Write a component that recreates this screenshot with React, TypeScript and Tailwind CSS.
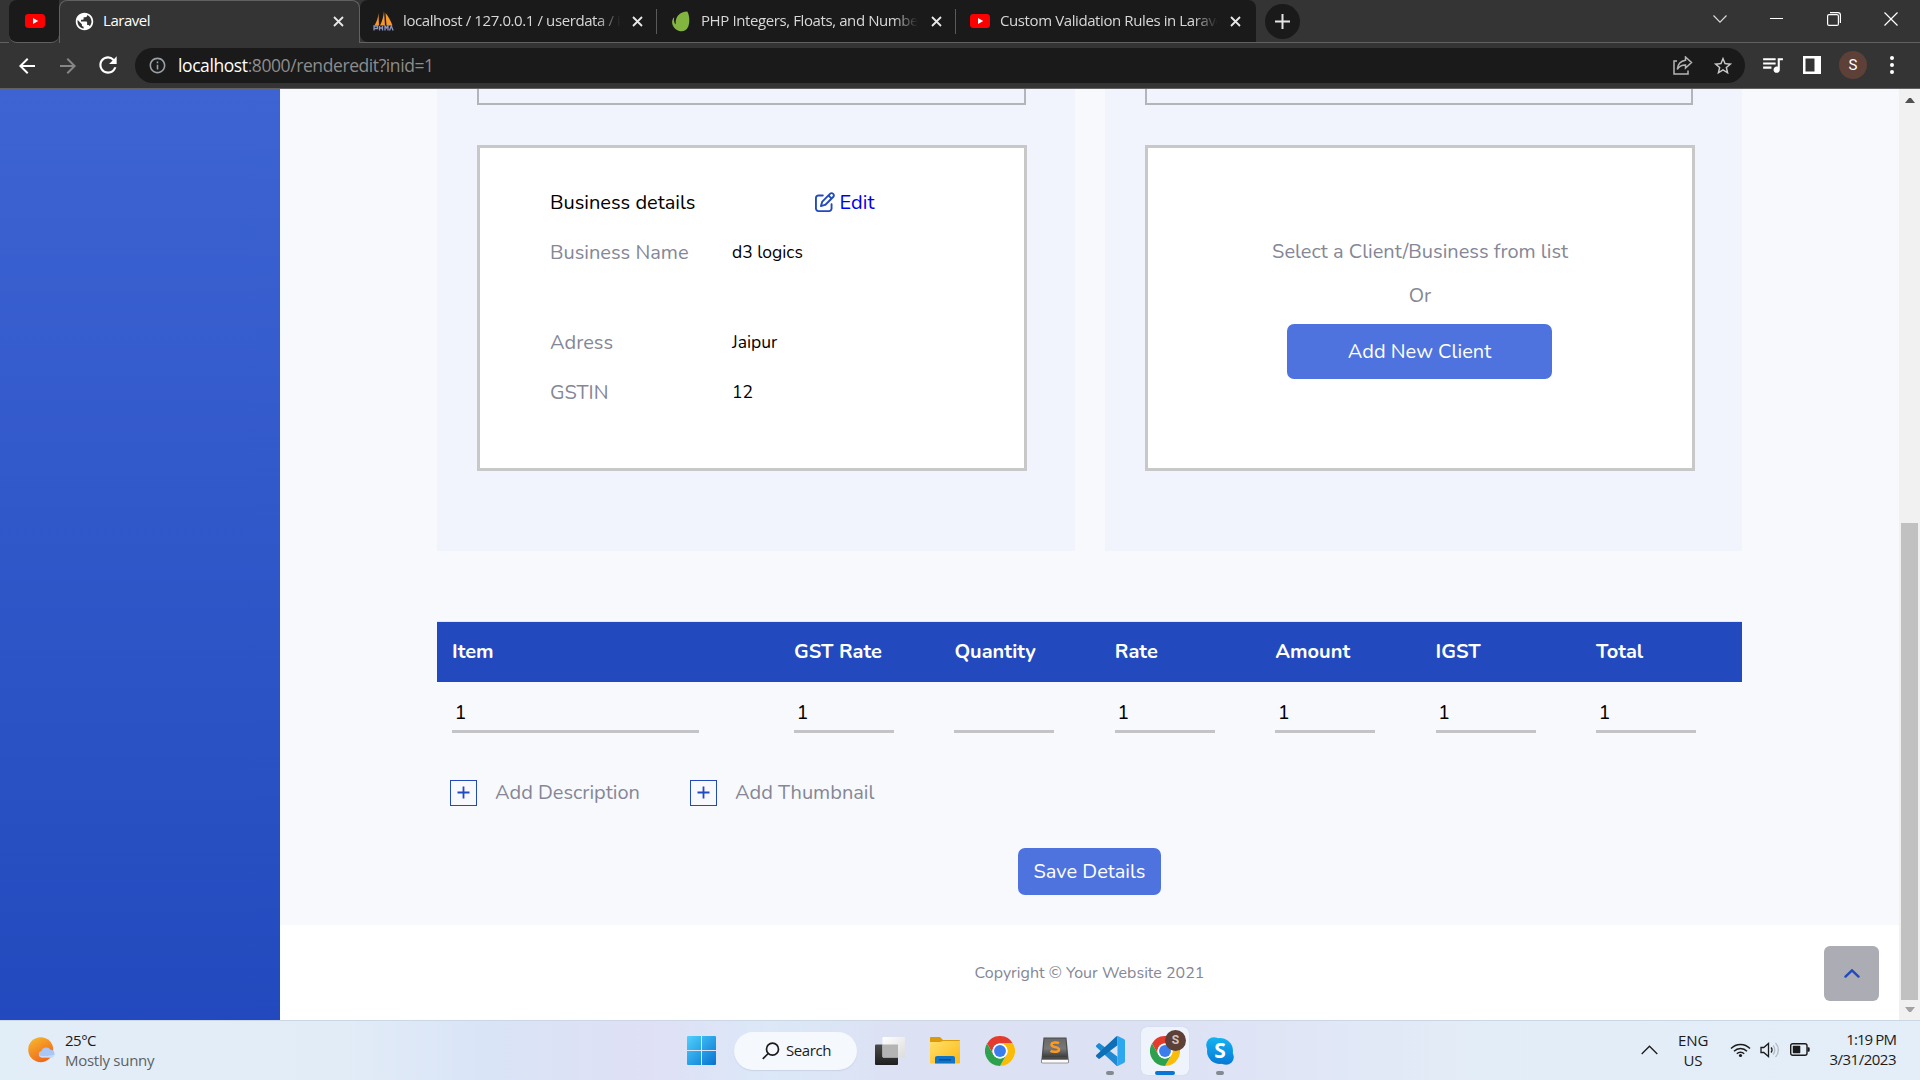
import React from 'react';
import {
  MdArrowBack,
  MdArrowForward,
  MdRefresh,
  MdInfoOutline,
  MdPublic,
  MdStarBorder,
  MdQueueMusic,
} from 'react-icons/md';
import { FaRegPenToSquare } from 'react-icons/fa6';

/* ---------- small icons ---------- */

function YoutubeIcon() {
  return (
    <svg width="20" height="14" viewBox="0 0 20 14" className="shrink-0">
      <rect width="20" height="14" rx="3.4" fill="#f00" />
      <path d="M8 4v6l5.2-3z" fill="#fff" />
    </svg>
  );
}

function CloseIcon() {
  return (
    <svg width="11" height="11" viewBox="0 0 11 11" className="shrink-0">
      <path d="M1 1l9 9M10 1l-9 9" stroke="#e8e8e8" strokeWidth="1.8" />
    </svg>
  );
}

function PmaIcon() {
  return (
    <svg width="21" height="20" viewBox="0 0 21 20" className="shrink-0">
      <path d="M5.500 2C5 7.500 3.500 11 1.500 14.500h4.500zM11 0C10.500 6 9 10.500 7 14.500h5zM12.500 2c3 3.500 5.500 8 7 12.500h-6z" fill="#f6982a" />
      <path d="M1 19.500v-4.500h3.500v2.500H1M6.500 19.500v-4.500M6.500 17h3M9.500 15v4.500M12 19.500v-4.500l1.500 2 1.500-2v4.500M16.500 19.500l1.800-4.500 1.800 4.500" stroke="#8f94bd" strokeWidth="1.300" fill="none" />
    </svg>
  );
}

function LeafIcon() {
  return (
    <svg width="18" height="21" viewBox="0 0 18 21" className="shrink-0">
      <path d="M15.300.4C17 2.500 18.300 10 16.300 15.500 14.300 20 10.300 21 7.300 20 3.300 19 .8 15.500.2 12.500-.2 10 .8 7.500 1.800 6.500c.4 0 .4.300.3.800C1.800 10 2.300 12 3.300 13c.3.300.5.100.4-.3C3.300 6 7.300.5 15.300.4z" fill="#82b440" />
    </svg>
  );
}

function ChromeIcon() {
  return (
    <svg width="30" height="30" viewBox="0 0 48 48">
      <circle cx="24" cy="24" r="24" fill="#fff" />
      <path d="M24 12h20.800A24 24 0 0 0 3.200 12L13.600 30A12 12 0 0 1 24 12z" fill="#e33b2e" />
      <path d="M34.400 30L24 48A24 24 0 0 0 44.800 12H24a12 12 0 0 1 10.400 18z" fill="#fbbc09" />
      <path d="M13.600 30L3.200 12A24 24 0 0 0 24 48l10.400-18a12 12 0 0 1-20.800 0z" fill="#2da14e" />
      <circle cx="24" cy="24" r="12" fill="#fff" />
      <circle cx="24" cy="24" r="9.500" fill="#3b7ded" />
    </svg>
  );
}

function WindowsIcon() {
  return (
    <svg width="29" height="29" viewBox="0 0 29 29">
      <defs>
        <linearGradient id="win" x1="0" y1="0" x2="1" y2="1" gradientUnits="objectBoundingBox">
          <stop offset="0" stopColor="#4fd0fd" />
          <stop offset="1" stopColor="#0672d0" />
        </linearGradient>
      </defs>
      <path d="M1 0h13v14H0V1a1 1 0 0 1 1-1zM15 0h13a1 1 0 0 1 1 1v13H15zM0 15h14v14H1a1 1 0 0 1-1-1zM15 15h14v13a1 1 0 0 1-1 1H15z" fill="url(#win)" />
    </svg>
  );
}

function TaskViewIcon() {
  return (
    <svg width="30" height="28" viewBox="0 0 30 28">
      <defs>
        <linearGradient id="tvd" x1="0" y1="0" x2="0" y2="1">
          <stop offset="0" stopColor="#4b4b4b" />
          <stop offset="1" stopColor="#1f1f1f" />
        </linearGradient>
        <linearGradient id="tvl" x1="0" y1="0" x2="1" y2="1">
          <stop offset="0" stopColor="#fff" />
          <stop offset="1" stopColor="#dcdcdc" />
        </linearGradient>
      </defs>
      <rect x="0" y="7.500" width="23" height="20.500" rx="1" fill="url(#tvd)" />
      <rect x="7.500" y="0" width="22.500" height="20.500" rx="1" fill="url(#tvl)" />
      <path d="M7.500 7.500H23v13H8.500a1 1 0 0 1-1-1z" fill="#b4b4b4" />
    </svg>
  );
}

function FolderIcon() {
  return (
    <svg width="30" height="27" viewBox="0 0 30 27">
      <defs>
        <linearGradient id="fold" x1="0" y1="0" x2="1" y2="1">
          <stop offset="0" stopColor="#ffdf6b" />
          <stop offset="1" stopColor="#fdb913" />
        </linearGradient>
      </defs>
      <path d="M0 1a1 1 0 0 1 1-1h9l3 3h16a1 1 0 0 1 1 1v4H0z" fill="#dd9a08" />
      <path d="M0 5h10l3-1h17v21.500a1 1 0 0 1-1 1H1a1 1 0 0 1-1-1z" fill="url(#fold)" />
      <path d="M5 26.500V21a2 2 0 0 1 2-2h16a2 2 0 0 1 2 2v5.500z" fill="#0f74c8" />
      <path d="M9 22.800h12" stroke="#0a4c8c" strokeWidth="1.400" />
    </svg>
  );
}

function SublimeIcon() {
  return (
    <svg width="28" height="27" viewBox="0 0 28 27">
      <defs>
        <linearGradient id="sub" x1="0" y1="0" x2="0" y2="1">
          <stop offset="0" stopColor="#6a6a6a" />
          <stop offset=".55" stopColor="#777" />
          <stop offset="1" stopColor="#3c3c3c" />
        </linearGradient>
      </defs>
      <path d="M2.500.5h23L27.500 22v4h-27v-4z" fill="#4a4a4a" />
      <path d="M.5 22.500h27v2.500a1 1 0 0 1-1 1h-25a1 1 0 0 1-1-1z" fill="#fafafa" stroke="#666" strokeWidth=".6" />
      <path d="M3.500 1.500h21L26 20H2z" fill="url(#sub)" />
      <path d="M18 6.200c-2-1.100-7.500-1.100-7.500 1.600 0 3 7.500 1.600 7.500 4.600 0 2.900-6 2.900-8.500 1.500" stroke="#ff9a1f" strokeWidth="2.500" fill="none" />
    </svg>
  );
}

function VsCodeIcon() {
  return (
    <svg width="30" height="30" viewBox="0 0 30 30">
      <path d="M1.300 9.200l2-1.800a1.300 1.300 0 0 1 1.600 0L22.500 20.800V30a2 2 0 0 1-1.300-.6L1.300 11a1.200 1.200 0 0 1 0-1.800z" fill="#1f8ad2" />
      <path d="M1.300 20.800l2 1.800a1.300 1.300 0 0 0 1.600 0L22.500 9.200V0a2 2 0 0 0-1.300.6L1.300 19a1.200 1.200 0 0 0 0 1.800z" fill="#0f6fb4" />
      <path d="M21 29.500c.8.600 1.500.6 2.200.2l5.700-2.700a2 2 0 0 0 1.100-1.800V4.800A2 2 0 0 0 28.900 3L23.200.3c-.7-.4-1.400-.4-2.200.2.800-.5 1.500 0 1.500 1v27c0 1-.700 1.500-1.500 1z" fill="#2da7ef" />
    </svg>
  );
}

function SkypeIcon() {
  return (
    <div className="relative flex size-7 items-center justify-center">
      <svg width="28" height="28" viewBox="0 0 28 28" className="absolute inset-0">
        <defs>
          <linearGradient id="sky" x1="0" y1="0" x2="0" y2="28" gradientUnits="userSpaceOnUse">
            <stop offset="0" stopColor="#14b4f0" />
            <stop offset="1" stopColor="#0678d6" />
          </linearGradient>
        </defs>
        <g fill="url(#sky)">
          <circle cx="14" cy="14" r="13" />
          <circle cx="8" cy="8" r="7.800" />
          <circle cx="20" cy="20" r="7.800" />
        </g>
      </svg>
      <span className="relative font-['Open_Sans',sans-serif] text-[21px] leading-none font-bold text-white">S</span>
    </div>
  );
}

/* ---------- browser chrome ---------- */

function TitleTab({ icon, title, width, gap }: { icon: React.ReactNode; title: string; width: string; gap: string }) {
  return (
    <div className={`flex h-full items-center ${width} ${gap}`}>
      {icon}
      <span className="min-w-0 flex-1 overflow-hidden [mask-image:linear-gradient(90deg,#000_88%,transparent_99%)] pb-0.5 text-[15px] leading-5 tracking-[-0.4px] whitespace-nowrap text-[#d8d8d8]">
        {title}
      </span>
      <CloseIcon />
    </div>
  );
}

function TabStrip() {
  return (
    <div className="flex h-[43px] shrink-0 bg-[#343434]">
      <div className="w-[9px] border-b border-[#616161]" />
      <div className="flex w-[50px] items-center justify-center rounded-l-lg rounded-br-lg border-b border-[#616161] bg-[#1a1a1a] pl-0.5">
        <YoutubeIcon />
      </div>
      <div className="flex w-[301px] items-center rounded-t-lg border-x border-t border-[#616161] pr-[15px] pb-0.5 pl-3.5">
        <MdPublic className="size-[21px] shrink-0 text-white" />
        <span className="flex-1 pb-[3px] pl-2 text-[15px] leading-5 tracking-[-0.45px] text-white">Laravel</span>
        <CloseIcon />
      </div>
      <div className="flex flex-1 border-b border-[#616161]">
        <div className="flex w-[896px] rounded-t-lg rounded-bl-lg bg-[#1a1a1a] pl-[13px]">
          <TitleTab icon={<PmaIcon />} title="localhost / 127.0.0.1 / userdata / i" width="w-[270px]" gap="gap-[9px]" />
          <div className="mr-[15px] ml-[13px] h-[25px] w-px self-center bg-[#5a5a5a]" />
          <TitleTab icon={<LeafIcon />} title="PHP Integers, Floats, and Number" width="w-[270px]" gap="gap-[11px]" />
          <div className="mr-[14px] ml-[13px] h-[25px] w-px self-center bg-[#5a5a5a]" />
          <TitleTab icon={<YoutubeIcon />} title="Custom Validation Rules in Laravel" width="w-[271px]" gap="gap-[10px]" />
        </div>
        <div className="ml-[9px] flex size-[35px] items-center justify-center self-center rounded-full bg-[#1a1a1a]">
          <svg width="15" height="15" viewBox="0 0 15 15">
            <path d="M7.500 0v15M0 7.500h15" stroke="#e3e3e3" strokeWidth="2" />
          </svg>
        </div>
        <div className="ml-auto flex h-[37px] items-center pr-[22px]">
          <svg width="14" height="8" viewBox="0 0 14 8" className="mr-[43px]">
            <path d="M.5.500L7 7.200 13.500.5" stroke="#ddd" strokeWidth="1.100" fill="none" />
          </svg>
          <div className="mr-[44px] h-px w-[13px] bg-white" />
          <svg width="14" height="14" viewBox="0 0 14 14" className="mr-[43px]" fill="none" stroke="#fff" strokeWidth="1.200">
            <rect x=".6" y="2.600" width="10.800" height="10.800" rx="1.500" />
            <path d="M3 .6h8A2.400 2.400 0 0 1 13.400 3v8" />
          </svg>
          <svg width="14" height="14" viewBox="0 0 14 14">
            <path d="M.5.500l13 13M13.500.500l-13 13" stroke="#fff" strokeWidth="1.200" />
          </svg>
        </div>
      </div>
    </div>
  );
}

function Toolbar() {
  return (
    <div className="flex h-[46px] shrink-0 items-center border-b border-[#616161] bg-[#343434]">
      <MdArrowBack className="ml-[15px] size-6 text-white" />
      <MdArrowForward className="ml-[17px] size-6 text-[#868686]" />
      <MdRefresh className="mb-px ml-[15px] size-[26px] text-white" />
      <div className="ml-[14px] flex h-[35px] w-[1610px] items-center rounded-full bg-[#1a1a1a] pr-[11px] pl-[13px]">
        <MdInfoOutline className="size-[19px] text-[#9aa0a6]" />
        <span className="flex-1 pb-px pl-[11px] text-[17.5px] leading-6 tracking-[-0.41px] text-[#8d8d8d]">
          <span className="text-white">localhost</span>:8000/renderedit?inid=1
        </span>
        <svg width="20" height="19" viewBox="0 0 20 19" fill="none" stroke="#b5b5b5" strokeWidth="1.500" className="mr-[19px]">
          <path d="M4 5H1v13h14v-3.500" />
          <path d="M12.500 1l6 5.500-6 5.500V9C9 9 6 10.300 4.300 13.300 4.800 8.500 8 5 12.500 4.300z" />
        </svg>
        <MdStarBorder className="size-[22px] text-[#c9c9c9]" />
      </div>
      <MdQueueMusic className="mb-0.5 ml-[15px] size-[25px] text-white" />
      <svg width="18" height="18" viewBox="0 0 18 18" className="mb-px ml-[18px]">
        <path d="M0 0h18v18H0zM2.500 2.500v13h9v-13z" fill="#fff" fillRule="evenodd" />
      </svg>
      <div className="mb-px ml-[18px] flex size-7 items-center justify-center rounded-full bg-[#5d4037] font-['Roboto',sans-serif] text-[15px] text-white">S</div>
      <div className="mb-px ml-[23px] flex flex-col gap-[3px]">
        <div className="size-1 rounded-full bg-white" />
        <div className="size-1 rounded-full bg-white" />
        <div className="size-1 rounded-full bg-white" />
      </div>
    </div>
  );
}

/* ---------- invoice page ---------- */

function BusinessRow({ label, value, className = '' }: { label: string; value: string; className?: string }) {
  return (
    <div className={`flex h-[30px] ${className}`}>
      <div className="w-[182px] text-[#858796]">{label}</div>
      <div className="-mt-px text-[17.5px] text-black">{value}</div>
    </div>
  );
}

function PartyColumn({ width, stubWidth, cardClass, children }: { width: string; stubWidth: string; cardClass: string; children: React.ReactNode }) {
  return (
    <section className={`flex h-[462px] flex-col bg-[#f1f4fc] pl-10 ${width}`}>
      <div className={`h-4 shrink-0 border-x-2 border-b-2 border-[#b3b5bb] ${stubWidth}`} />
      <div className={`mt-10 flex h-[326px] w-[550px] shrink-0 flex-col border-3 border-[#c8c8c8] bg-white ${cardClass}`}>
        {children}
      </div>
    </section>
  );
}

const columns = [
  { name: 'Item', value: '1' },
  { name: 'GST Rate', value: '1' },
  { name: 'Quantity', value: '' },
  { name: 'Rate', value: '1' },
  { name: 'Amount', value: '1' },
  { name: 'IGST', value: '1' },
  { name: 'Total', value: '1' },
];

function ItemTable() {
  return (
    <div className="mt-[70px] border-t border-[#e3e6f0]">
      <div className="grid h-[60px] grid-cols-[342px_repeat(6,160.400px)] items-center overflow-hidden bg-[#224abe] pl-[15px] font-bold text-white">
        {columns.map((c) => (
          <div key={c.name}>{c.name}</div>
        ))}
      </div>
      <div className="grid h-[51px] grid-cols-[342px_repeat(6,160.400px)] pl-[15px]">
        {columns.map((c, i) => (
          <div
            key={c.name}
            className={`${i === 0 ? 'w-[247px]' : 'w-[100px]'} border-b-3 border-[#c4c4c6] pt-4 pl-[2.5px] text-black`}
          >
            {c.value}
          </div>
        ))}
      </div>
    </div>
  );
}

function AddAction({ label }: { label: string }) {
  return (
    <div className="flex w-[240px] items-center">
      <div className="flex h-[26px] w-[27px] items-center justify-center border border-[#224abe] pb-px">
        <svg width="13" height="13" viewBox="0 0 13 13">
          <path d="M6.500.500v12M.5 6.500h12" stroke="#224abe" strokeWidth="1.800" />
        </svg>
      </div>
      <span className="pl-[18px] text-[#858796]">{label}</span>
    </div>
  );
}

function InvoicePage() {
  return (
    <div className="flex min-h-0 flex-1">
      <aside className="w-[280px] shrink-0 bg-linear-to-b from-[#3e64d3] to-[#224abe]" />
      <main className="relative flex min-w-0 flex-1 flex-col bg-[#f8f9fd] font-['Nunito','Nunito_Sans','Lato',sans-serif] text-[20px] leading-[30px]">
        <div className="flex flex-1 flex-col px-[157px]">
          <div className="flex gap-[30px]">
            <PartyColumn width="w-[638px]" stubWidth="w-[549px]" cardClass="pt-10 pl-[70px]">
              <div className="flex h-[30px] items-center">
                <div className="w-[264.5px] text-black">Business details</div>
                <FaRegPenToSquare className="mb-[3px] size-5 text-[#224abe]" />
                <span className="pl-[5px] text-[#0000ee]">Edit</span>
              </div>
              <BusinessRow label="Business Name" value="d3 logics" className="mt-5" />
              <BusinessRow label="Adress" value="Jaipur" className="mt-[60px]" />
              <BusinessRow label="GSTIN" value="12" className="mt-5" />
            </PartyColumn>
            <PartyColumn width="w-[637px]" stubWidth="w-[548px]" cardClass="items-center pt-[89px] text-[#858796]">
              <div>Select a Client/Business from list</div>
              <div className="mt-3.5">Or</div>
              <button className="mt-[13px] mr-px h-[55px] w-[265px] rounded-[7px] bg-[#4e73df] text-white">Add New Client</button>
            </PartyColumn>
          </div>
          <ItemTable />
          <div className="mt-[45px] flex pl-[13px]">
            <AddAction label="Add Description" />
            <AddAction label="Add Thumbnail" />
          </div>
          <button className="mt-10 h-[47px] w-[143px] self-center rounded-[7px] bg-[#4e73df] text-white">Save Details</button>
        </div>
        <footer className="flex h-[95px] items-center justify-center bg-white text-[16px] text-[#858796]">
          Copyright © Your Website 2021
        </footer>
        <div className="absolute right-[20px] bottom-[19px] flex size-[55px] items-center justify-center rounded-[6px] bg-[#acacb5]">
          <svg width="16" height="9" viewBox="0 0 16 9">
            <path d="M1.500 7.600L8 1.400l6.500 6.200" stroke="#224abe" strokeWidth="2.400" strokeLinecap="round" fill="none" />
          </svg>
        </div>
      </main>
      <div className="flex w-[21px] shrink-0 flex-col items-center bg-[#f1f1f1]">
        <svg width="10" height="5" viewBox="0 0 10 5" className="mt-[9px] shrink-0">
          <path d="M0 5l4-5h2l4 5z" fill="#505050" />
        </svg>
        <div className="mt-auto h-[477px] w-[17px] bg-[#c1c1c1]" />
        <svg width="10" height="5" viewBox="0 0 10 5" className="mt-[7px] mb-2 shrink-0">
          <path d="M0 0l4 5h2l4-5z" fill="#a3a3a3" />
        </svg>
      </div>
    </div>
  );
}

/* ---------- taskbar ---------- */

function TaskItem({ children, className = '', mark = '' }: { children: React.ReactNode; className?: string; mark?: string }) {
  return (
    <div className={`relative flex h-12 w-12 items-center justify-center ${className}`}>
      {children}
      {mark && <div className={`absolute bottom-0 left-1/2 h-1 -translate-x-1/2 rounded-full ${mark}`} />}
    </div>
  );
}

function Taskbar() {
  return (
    <div className="grid h-[60px] shrink-0 grid-cols-[675px_1fr_300px] items-center border-t border-[#ccd7e6] bg-[linear-gradient(90deg,#e2eef7_0%,#e2ecf7_18%,#d9e4f7_25%,#dfe0f5_34%,#dbe8f8_40%,#dce2f4_46%,#dce1f4_60%,#e0e6f6_68%,#e3edf7_78%,#e3eef8_100%)] text-[15px] leading-5 text-[#1b1b1b]">
      <div className="flex items-center pb-0.5 pl-7">
        <svg width="29" height="26" viewBox="0 0 29 26">
          <defs>
            <linearGradient id="sun" x1="0" y1="0" x2=".6" y2="1">
              <stop offset="0" stopColor="#f6bd2e" />
              <stop offset="1" stopColor="#f0661a" />
            </linearGradient>
          </defs>
          <circle cx="12.700" cy="12.700" r="12.500" fill="url(#sun)" />
          <path d="M13.500 20.500a3.300 3.300 0 0 1 0-6.500 5 5 0 0 1 9-1.200 4 4 0 0 1 1.500 7.700z" fill="#a9c6f5" />
          <path d="M13.500 20.500a3.300 3.300 0 0 1-2.500-2c5 1 11 .5 15.500-1a4 4 0 0 1-2.500 3z" fill="#c8dbfa" />
        </svg>
        <div className="pl-2">
          <div className="tracking-[-0.5px]">25°C</div>
          <div className="tracking-[-0.27px] text-[#5c6165]">Mostly sunny</div>
        </div>
      </div>
      <div className="flex items-center">
        <TaskItem className="ml-[2px]"><WindowsIcon /></TaskItem>
        <div className="mr-[9px] ml-[9px] flex h-[38px] w-[123px] items-center rounded-full bg-[#f5f8fd] pl-[28px] shadow-[0_1px_1px_#c9d3e6]">
          <svg width="18" height="18" viewBox="0 0 18 18" fill="none" stroke="#1b1b1b" strokeWidth="1.700">
            <circle cx="10.500" cy="7.200" r="6" />
            <path d="M6.200 11.500L.8 16.800" />
          </svg>
          <span className="pb-0.5 pl-1.5 tracking-[-0.4px]">Search</span>
        </div>
        <div className="flex items-center gap-[7px]">
          <TaskItem><TaskViewIcon /></TaskItem>
          <TaskItem><FolderIcon /></TaskItem>
          <TaskItem><ChromeIcon /></TaskItem>
          <TaskItem className="pb-px"><SublimeIcon /></TaskItem>
          <TaskItem mark="w-2 bg-[#858990]"><VsCodeIcon /></TaskItem>
          <TaskItem className="rounded-md bg-[#eff3fc] shadow-[0_0_1px_#b9c3d6]" mark="w-5 bg-[#0a75d3]">
            <ChromeIcon />
            <div className="absolute top-[3px] right-[3px] flex size-[21px] items-center justify-center rounded-full bg-[#5d4037] font-['Roboto',sans-serif] text-[12px] font-bold text-[#d3c5c0]">
              S
            </div>
          </TaskItem>
          <TaskItem mark="w-2 bg-[#858990]"><SkypeIcon /></TaskItem>
        </div>
      </div>
      <div className="flex items-center justify-end pr-6 pb-0.5">
        <svg width="17" height="10" viewBox="0 0 17 10">
          <path d="M.7 9L8.500 1.200 16.300 9" stroke="#1b1b1b" strokeWidth="1.300" fill="none" />
        </svg>
        <div className="ml-5 w-[30px] text-center tracking-[-0.1px]">
          <div>ENG</div>
          <div>US</div>
        </div>
        <svg width="21" height="16" viewBox="0 0 21 16" className="ml-[22px]" fill="none" stroke="#1b1b1b" strokeWidth="1.400">
          <path d="M1 6.500a13.200 13.200 0 0 1 19 0M4 9.300a9 9 0 0 1 13 0M6.800 11.800a5.200 5.200 0 0 1 7.400 0" />
          <circle cx="10.500" cy="13.500" r="1.600" fill="#1b1b1b" stroke="none" />
        </svg>
        <svg width="20" height="16" viewBox="0 0 20 16" className="ml-[9px]" fill="none" stroke="#1b1b1b" strokeWidth="1.300">
          <path d="M1 5.500v5h2.800l4.700 4V1.500l-4.700 4z" />
          <path d="M11 5.500a3.500 3.500 0 0 1 0 5" />
          <path d="M13 3.500a6.500 6.500 0 0 1 0 9M15.500 1a10 10 0 0 1 0 14" stroke="#b4bcc4" />
        </svg>
        <svg width="20" height="13" viewBox="0 0 20 13" className="ml-[10px]">
          <rect x=".7" y=".7" width="16.300" height="11.600" rx="2" fill="none" stroke="#1b1b1b" strokeWidth="1.400" />
          <rect x="2.800" y="2.800" width="7.500" height="7.400" rx=".6" fill="#1b1b1b" />
          <path d="M17.500 4.300h1a1.200 1.200 0 0 1 1.200 1.200v2a1.200 1.200 0 0 1-1.200 1.200h-1z" fill="#1b1b1b" />
        </svg>
        <div className="ml-[19px] w-[67px] pb-0.5 text-right whitespace-nowrap">
          <div className="tracking-[-0.9px]">1:19 PM</div>
          <div className="tracking-[-0.5px]">3/31/2023</div>
        </div>
      </div>
    </div>
  );
}

export default function App() {
  return (
    <div className="flex h-[1080px] w-[1920px] flex-col overflow-hidden font-['Open_Sans',sans-serif]">
      <TabStrip />
      <Toolbar />
      <InvoicePage />
      <Taskbar />
    </div>
  );
}
